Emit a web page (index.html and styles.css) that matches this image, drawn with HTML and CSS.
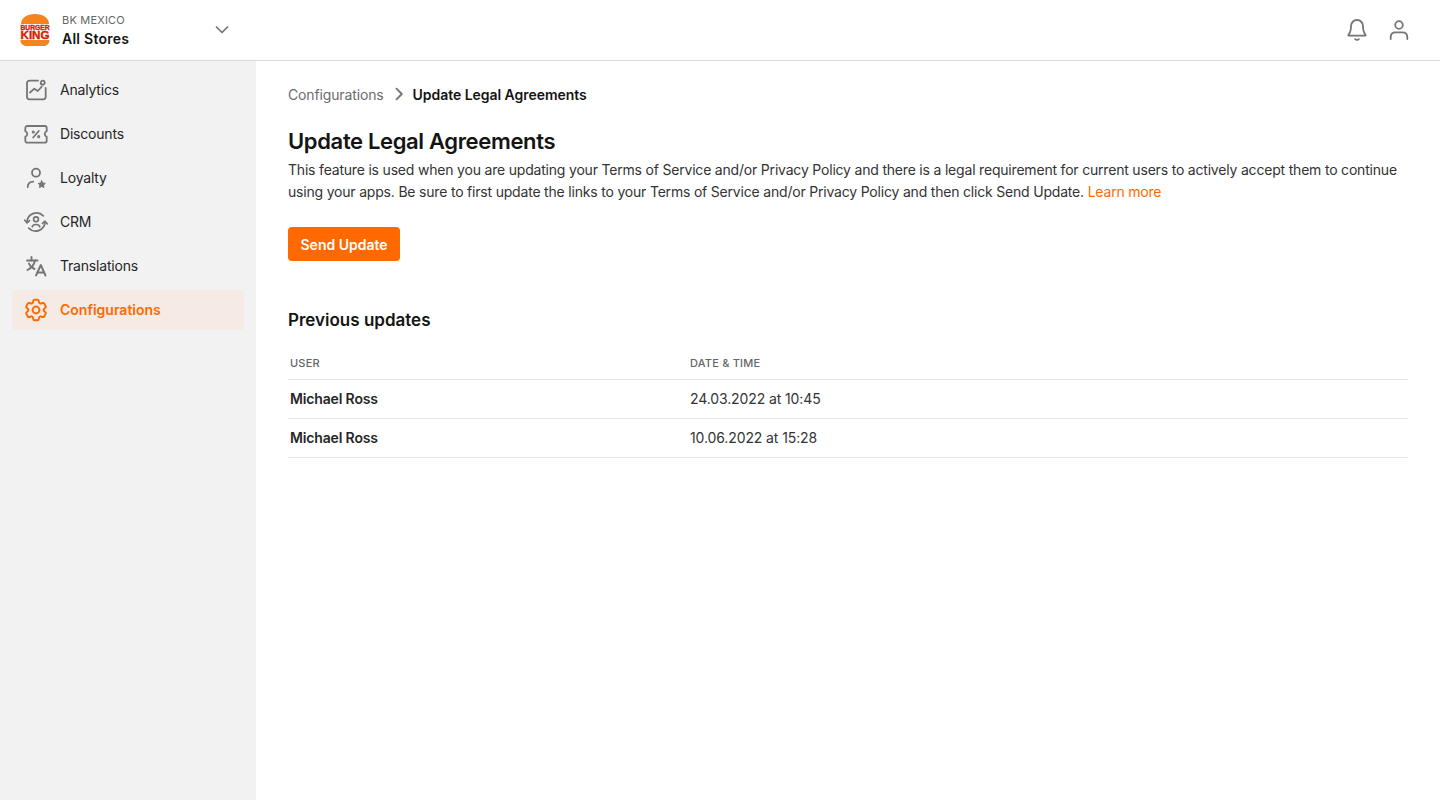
FILE: index.html
```html
<!DOCTYPE html>
<html lang="en">
<head>
<meta charset="utf-8">
<title>Update Legal Agreements</title>
<link rel="stylesheet" href="styles.css">
</head>
<body>
<header class="topbar">
  <div class="brand">
    <svg class="logo" viewBox="0 0 30 32" width="30" height="32">
      <path d="M1 10C1 4 7 0 15 0s14 4 14 10z" fill="#f5841f"/>
      <path d="M.5 26h29c0 3.500-2.500 6-6 6H6.500c-3.500 0-6-2.500-6-6z" fill="#f5841f"/>
      <text class="logo-text" x="15" y="16" textLength="29" lengthAdjust="spacingAndGlyphs">BURGER</text>
      <text class="logo-text logo-big" x="15" y="25" textLength="29" lengthAdjust="spacingAndGlyphs">KING</text>
    </svg>
    <div class="brand-text">
      <span class="brand-org">BK MEXICO</span>
      <span class="brand-store">All Stores</span>
    </div>
    <svg class="chevron" viewBox="0 0 16 16" width="16" height="16"><path d="M2.500 5 8 10.500 13.500 5" fill="none" stroke="#757575" stroke-width="1.700" stroke-linecap="round" stroke-linejoin="round"/></svg>
  </div>
  <div class="top-actions">
    <svg class="top-icon" viewBox="0 0 24 24" width="24" height="24" fill="none" stroke="#757575" stroke-width="1.800" stroke-linecap="round" stroke-linejoin="round"><path d="M6 8a6 6 0 0 1 12 0c0 4.500.8 6.800 2.600 9 .2.300 0 .7-.3.700H3.700c-.3 0-.5-.4-.3-.7C5.200 14.800 6 12.500 6 8z"/><path d="M10.200 21.200c.8.700 2.800.7 3.600 0"/></svg>
    <svg class="top-icon" viewBox="0 0 24 24" width="24" height="24" fill="none" stroke="#757575" stroke-width="1.800" stroke-linecap="round" stroke-linejoin="round"><circle cx="12" cy="7" r="3.800"/><path d="M3.700 21v-1.700c0-3 2-5 4.800-5h7c2.800 0 4.800 2 4.800 5V21"/></svg>
  </div>
</header>
<div class="shell">
  <nav class="sidebar">
    <a class="nav-item">
      <svg class="nav-icon" viewBox="0 0 24 24" width="24" height="24" fill="none" stroke="currentColor" stroke-width="1.800" stroke-linecap="round" stroke-linejoin="round"><path d="M14 2.700H5.500A2.500 2.500 0 0 0 3 5.200v13.600a2.500 2.500 0 0 0 2.500 2.500h13.700a2.500 2.500 0 0 0 2.500-2.500V10"/><circle cx="18.700" cy="4.700" r="2"/><path d="M6 14.500l4.300-3.800 3.400 2.300 4-4.300"/></svg>
      <span>Analytics</span>
    </a>
    <a class="nav-item">
      <svg class="nav-icon" viewBox="0 0 24 24" width="24" height="24" fill="none" stroke="currentColor" stroke-width="1.800" stroke-linecap="round" stroke-linejoin="round"><path d="M3.300 4h17.400a2 2 0 0 1 2 2v3.200a3 3 0 0 0 0 5.600v3.900a2 2 0 0 1-2 2H3.300a2 2 0 0 1-2-2v-3.900a3 3 0 0 0 0-5.600V6a2 2 0 0 1 2-2z"/><path d="M9.200 15.500l5.600-6.500"/><circle cx="9.300" cy="10" r=".7"/><circle cx="14.700" cy="14.700" r=".7"/></svg>
      <span>Discounts</span>
    </a>
    <a class="nav-item">
      <svg class="nav-icon" viewBox="0 0 24 24" width="24" height="24" fill="none" stroke="currentColor" stroke-width="1.800" stroke-linecap="round" stroke-linejoin="round"><circle cx="12" cy="6.700" r="4"/><path d="M3.700 21c0-3 2-5.300 5.500-5.300"/><path d="M17.700 14.800l1.100 2.200 2.500.4-1.800 1.700.4 2.400-2.200-1.100-2.200 1.100.4-2.400-1.800-1.700 2.500-.4z" fill="currentColor" stroke-width="1"/></svg>
      <span>Loyalty</span>
    </a>
    <a class="nav-item">
      <svg class="nav-icon" viewBox="0 0 24 24" width="24" height="24" fill="none" stroke="currentColor" stroke-width="1.700" stroke-linecap="round" stroke-linejoin="round"><path d="M3 12.500a9.500 9.500 0 0 1 16.300-6.700"/><path d="M21 11.500a9.500 9.500 0 0 1-16.300 6.700"/><path d="M.8 10.200 3 12.800l2.500-2.200"/><path d="M23.200 13.800 21 11.200l-2.500 2.200"/><circle cx="12" cy="9.300" r="2.400"/><path d="M8.200 16.800c.4-1.600 1.700-2.300 3.800-2.300s3.400.7 3.800 2.300"/></svg>
      <span>CRM</span>
    </a>
    <a class="nav-item">
      <svg class="nav-icon" viewBox="0 0 24 24" width="24" height="24" fill="none" stroke="currentColor" stroke-width="1.900" stroke-linecap="round" stroke-linejoin="round"><path d="M3 6.500h10.500"/><path d="M7.500 3v3.500"/><path d="M11 6.500C10.200 10.500 7.500 14 3.500 16"/><path d="M5 9.500c1 2.500 3 4.500 5.500 5.500"/><path d="M12 21.500 16.800 11l4.700 10.500"/><path d="M13.500 18.500h6.500"/></svg>
      <span>Translations</span>
    </a>
    <a class="nav-item active">
      <svg class="nav-icon" viewBox="1.500 1.500 21 21" width="24" height="24" fill="none" stroke="currentColor" stroke-width="1.700" stroke-linecap="round" stroke-linejoin="round"><path d="M9.594 3.940c.09-.542.56-.94 1.110-.94h2.593c.55 0 1.020.398 1.110.94l.213 1.281c.063.374.313.686.645.870.074.040.147.083.220.127.325.196.72.257 1.075.124l1.217-.456a1.125 1.125 0 0 1 1.370.490l1.296 2.247a1.125 1.125 0 0 1-.26 1.431l-1.003.827c-.293.241-.438.613-.43.992a7.723 7.723 0 0 1 0 .255c-.008.378.137.75.43.991l1.004.827c.424.35.534.955.26 1.430l-1.298 2.247a1.125 1.125 0 0 1-1.369.491l-1.217-.456c-.355-.133-.75-.072-1.076.124a6.470 6.470 0 0 1-.22.128c-.331.183-.581.495-.644.869l-.213 1.281c-.09.543-.56.94-1.110.94h-2.594c-.55 0-1.019-.398-1.110-.94l-.213-1.281c-.062-.374-.312-.686-.644-.87a6.520 6.520 0 0 1-.22-.127c-.325-.196-.72-.257-1.076-.124l-1.217.456a1.125 1.125 0 0 1-1.369-.49l-1.297-2.247a1.125 1.125 0 0 1 .26-1.431l1.004-.827c.292-.24.437-.613.43-.991a6.932 6.932 0 0 1 0-.255c.007-.38-.138-.751-.43-.992l-1.004-.827a1.125 1.125 0 0 1-.26-1.430l1.297-2.247a1.125 1.125 0 0 1 1.370-.491l1.216.456c.356.133.751.072 1.076-.124.072-.044.146-.086.22-.128.332-.183.582-.495.644-.869l.214-1.280z"/><circle cx="12" cy="12" r="3"/></svg>
      <span>Configurations</span>
    </a>
  </nav>
  <main class="content">
    <div class="breadcrumb">
      <span class="crumb">Configurations</span>
      <svg class="crumb-sep" viewBox="0 0 16 16" width="16" height="16"><path d="M5.500 2.700 10.800 8l-5.300 5.300" fill="none" stroke="#757575" stroke-width="1.900" stroke-linecap="round" stroke-linejoin="round"/></svg>
      <span class="crumb-current">Update Legal Agreements</span>
    </div>
    <h1 class="title">Update Legal Agreements</h1>
    <p class="lead">This feature is used when you are updating your Terms of Service and/or Privacy Policy and there is a legal requirement for current users to actively accept them to continue using your apps. Be sure to first update the links to your Terms of Service and/or Privacy Policy and then click Send Update. <span class="link">Learn more</span></p>
    <button class="primary" type="button">Send Update</button>
    <h2 class="subtitle">Previous updates</h2>
    <table class="updates">
      <thead>
        <tr><th class="col-user">USER</th><th>DATE &amp; TIME</th></tr>
      </thead>
      <tbody>
        <tr><td class="name">Michael Ross</td><td>24.03.2022 at 10:45</td></tr>
        <tr><td class="name">Michael Ross</td><td>10.06.2022 at 15:28</td></tr>
      </tbody>
    </table>
  </main>
</div>
</body>
</html>
```
FILE: styles.css
```css
* { box-sizing: border-box; }
html, body { margin: 0; height: 100%; }
body {
  font-family: Inter, "Liberation Sans", sans-serif;
  font-size: 14px;
  color: #141414;
  background: #fff;
  display: flex;
  flex-direction: column;
  height: 800px;
  overflow: hidden;
}
.topbar {
  height: 61px;
  flex: none;
  border-bottom: 1px solid #d9d9d9;
  display: flex;
  align-items: center;
  justify-content: space-between;
  padding: 0 29px 0 20px;
}
.brand { display: flex; align-items: center; }
.logo { width: 30px; height: 32px; flex: none; }
.logo-text { font-family: "Liberation Sans", sans-serif; font-weight: 700; font-size: 7px; fill: #d62300; stroke: #d62300; stroke-width: .4px; text-anchor: middle; }
.logo-big { font-size: 11px; }
.brand-text { display: flex; flex-direction: column; margin-left: 12px; padding-top: 2px; width: 145px; }
.brand-org { font-size: 11px; line-height: 16px; color: #666; letter-spacing: .2px; }
.brand-store { font-size: 14px; line-height: 22px; font-weight: 600; letter-spacing: .25px; }
.chevron { flex: none; margin-left: 7px; }
.top-actions { display: flex; gap: 18px; }
.shell { flex: 1; display: flex; min-height: 0; }
.sidebar {
  width: 256px;
  flex: none;
  background: #f2f2f2;
  padding: 9px 12px;
  display: flex;
  flex-direction: column;
  gap: 4px;
}
.nav-item {
  height: 40px;
  display: flex;
  align-items: center;
  gap: 12px;
  padding: 0 12px;
  border-radius: 4px;
  color: #262626;
  font-size: 14px;
  letter-spacing: -.2px;
}
.nav-item span { margin-bottom: 2px; }
.nav-icon { flex: none; color: #757575; }
.active { background: #f5ebe4; color: #ff6900; font-weight: 600; letter-spacing: 0; }
.active .nav-icon { color: #ff6900; }
.content { flex: 1; padding: 23px 32px 0; min-width: 0; }
.breadcrumb { display: flex; align-items: center; height: 20px; gap: 6px; font-size: 14px; }
.crumb { color: #6b6b6b; letter-spacing: -.14px; }
.crumb-current { font-weight: 600; letter-spacing: -.04px; }
.crumb-sep { flex: none; margin-left: 1px; }
.title { margin: 24px 0 0; font-size: 22px; line-height: 27px; font-weight: 600; letter-spacing: -.35px; }
.lead { margin: 4px 0 0; line-height: 22px; color: #333; letter-spacing: -.195px; }
.link { color: #ff6900; }
.primary {
  display: block;
  margin-top: 24px;
  height: 34px;
  padding: 0 12.500px;
  border: 0;
  border-radius: 4px;
  background: #ff6900;
  color: #fff;
  font: 600 14px Inter, sans-serif;
}
.subtitle { margin: 47px 0 0; font-size: 17px; line-height: 24px; font-weight: 600; }
.updates { width: 100%; margin-top: 16px; border-collapse: collapse; table-layout: fixed; }
.updates th { text-align: left; font-size: 11px; font-weight: 500; color: #666; height: 31px; padding: 0 2px; border-bottom: 1px solid #e5e5e5; letter-spacing: .2px; }
.updates td { height: 39px; padding: 0 2px; border-bottom: 1px solid #e5e5e5; color: #333; letter-spacing: -.11px; }
.col-user { width: 400px; }
.updates .name { font-weight: 600; color: #262626; letter-spacing: -.15px; }
```
